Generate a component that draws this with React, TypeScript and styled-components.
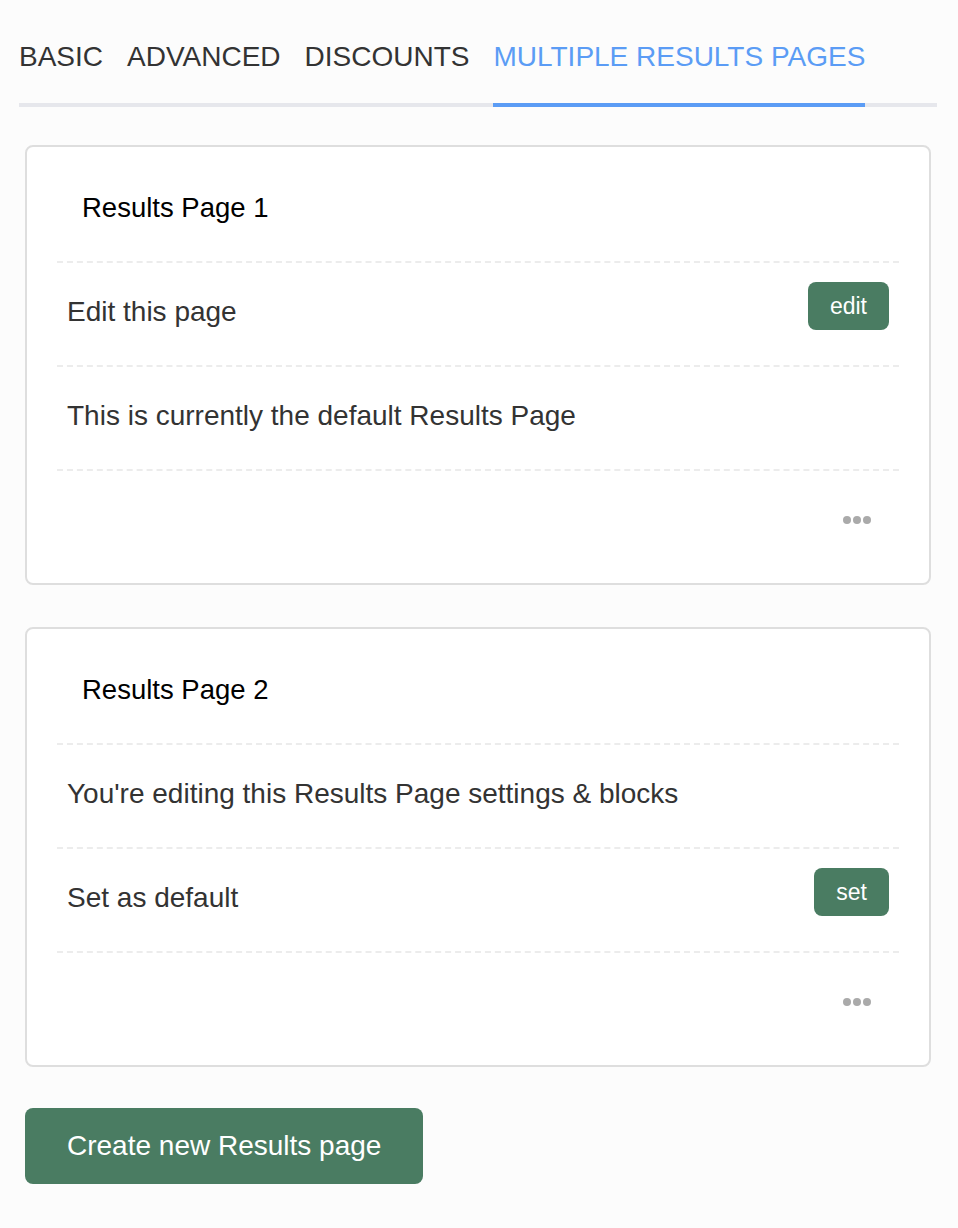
import styled, { createGlobalStyle } from 'styled-components';

const GlobalStyle = createGlobalStyle`
  html, body {
    margin: 0;
    padding: 0;
    background: #fcfcfc;
  }
  body {
    font-family: "Liberation Sans", Arial, sans-serif;
    color: #333;
  }
`;

const Page = styled.div`
  width: 958px;
  min-height: 1228px;
  box-sizing: border-box;
  padding-top: 41px;
`;

const TabBar = styled.div`
  display: flex;
  gap: 24px;
  margin: 0 21px 0 19px;
  border-bottom: 4px solid #e6e7ec;
`;

const Tab = styled.div<{ active?: boolean }>`
  font-size: 28px;
  line-height: 32px;
  padding-bottom: 30px;
  margin-bottom: -4px;
  color: ${({ active }) => (active ? '#5b9cf5' : '#333')};
  border-bottom: 4px solid ${({ active }) => (active ? '#5b9cf5' : 'transparent')};
  white-space: nowrap;
  cursor: pointer;
`;

const Content = styled.div`
  display: flex;
  flex-direction: column;
  align-items: flex-start;
  gap: 42px;
  margin: 38px 27px 0 25px;
`;

const CardWrapper = styled.div`
  align-self: stretch;
  background: #fff;
  border: 2px solid #dedede;
  border-radius: 8px;
  padding: 0 30px;
`;

const CardTitle = styled.div`
  font-size: 27.5px;
  line-height: 30px;
  color: #000;
  padding: 46px 25px 38px;
`;

const Row = styled.div`
  display: flex;
  align-items: center;
  justify-content: space-between;
  border-top: 2px dashed #ececec;
  padding: 33px 10px 37px;
  font-size: 28px;
  line-height: 32px;
`;

const SmallButton = styled.button`
  height: 48px;
  padding: 0 22px;
  margin: -20px 0 -8px;
  border: none;
  border-radius: 8px;
  background: #4a7c62;
  color: #fff;
  font-family: "Liberation Sans", Arial, sans-serif;
  font-size: 23px;
  cursor: pointer;
`;

const Footer = styled.div`
  display: flex;
  justify-content: flex-end;
  border-top: 2px dashed #ececec;
  padding: 45px 28px 59px;
`;

const MoreButton = styled.button`
  display: flex;
  padding: 0;
  border: none;
  background: none;
  cursor: pointer;
`;

const CreateButton = styled.button`
  height: 76px;
  padding: 0 42px;
  margin-top: -1px;
  border: none;
  border-radius: 8px;
  background: #4a7c62;
  color: #fff;
  font-family: "Liberation Sans", Arial, sans-serif;
  font-size: 28px;
  cursor: pointer;
`;

const Dots = () => (
  <svg width="28" height="8" viewBox="0 0 28 8">
    <circle cx="4" cy="4" r="4" fill="#aaa" />
    <circle cx="14" cy="4" r="4" fill="#aaa" />
    <circle cx="24" cy="4" r="4" fill="#aaa" />
  </svg>
);

type ResultsPage = {
  title: string;
  rows: { text: string; action?: string }[];
};

const pages: ResultsPage[] = [
  {
    title: 'Results Page 1',
    rows: [
      { text: 'Edit this page', action: 'edit' },
      { text: 'This is currently the default Results Page' },
    ],
  },
  {
    title: 'Results Page 2',
    rows: [
      { text: "You're editing this Results Page settings & blocks" },
      { text: 'Set as default', action: 'set' },
    ],
  },
];

const tabs = ['BASIC', 'ADVANCED', 'DISCOUNTS', 'MULTIPLE RESULTS PAGES'];

export default function App() {
  return (
    <>
      <GlobalStyle />
      <Page>
        <TabBar>
          {tabs.map((t) => (
            <Tab key={t} active={t === 'MULTIPLE RESULTS PAGES'}>
              {t}
            </Tab>
          ))}
        </TabBar>
        <Content>
          {pages.map((p) => (
            <CardWrapper key={p.title}>
              <CardTitle>{p.title}</CardTitle>
              {p.rows.map((r) => (
                <Row key={r.text}>
                  <span>{r.text}</span>
                  {r.action && <SmallButton>{r.action}</SmallButton>}
                </Row>
              ))}
              <Footer>
                <MoreButton aria-label="more">
                  <Dots />
                </MoreButton>
              </Footer>
            </CardWrapper>
          ))}
          <CreateButton>Create new Results page</CreateButton>
        </Content>
      </Page>
    </>
  );
}
